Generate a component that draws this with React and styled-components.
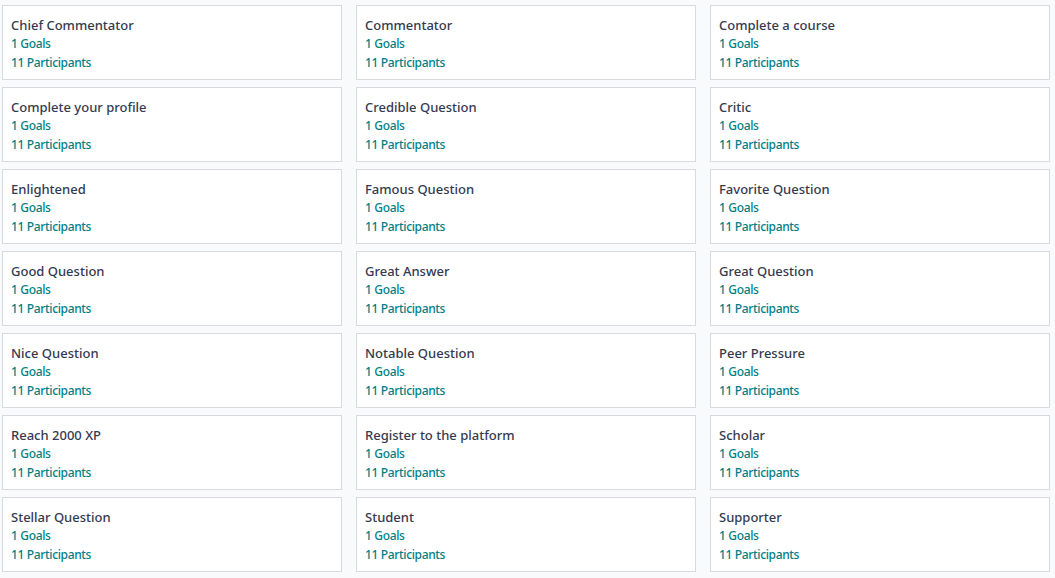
import React from "react";
import styled, { createGlobalStyle } from "styled-components";

const GlobalStyle = createGlobalStyle`
  html, body {
    margin: 0;
    padding: 0;
    background: #f9fafb;
  }
  body {
    font-family: "Noto Sans", "Open Sans", sans-serif;
  }
`;

const badges = [
  "Chief Commentator",
  "Commentator",
  "Complete a course",
  "Complete your profile",
  "Credible Question",
  "Critic",
  "Enlightened",
  "Famous Question",
  "Favorite Question",
  "Good Question",
  "Great Answer",
  "Great Question",
  "Nice Question",
  "Notable Question",
  "Peer Pressure",
  "Reach 2000 XP",
  "Register to the platform",
  "Scholar",
  "Stellar Question",
  "Student",
  "Supporter",
];

const App = () => {
  return (
    <>
      <GlobalStyle />
      <Wrapper>
        {badges.map((name) => (
          <Card key={name}>
            <Title>{name}</Title>
            <Stat>1 Goals</Stat>
            <Stat>11 Participants</Stat>
          </Card>
        ))}
      </Wrapper>
    </>
  );
};

const Wrapper = styled.div`
  display: grid;
  grid-template-columns: repeat(3, 340px);
  grid-auto-rows: 75px;
  column-gap: 14px;
  row-gap: 7px;
  padding: 5px 0 6px 2px;
  background: #f9fafb;
`;

const Card = styled.div`
  display: flex;
  flex-direction: column;
  box-sizing: border-box;
  background: #ffffff;
  border: 1px solid #d8dadd;
  padding: 10px 8px 0 8px;
`;

const Title = styled.span`
  font-size: 13px;
  font-weight: 500;
  line-height: 18px;
  color: #343a4f;
`;

const Stat = styled.span`
  font-size: 12px;
  font-weight: 500;
  line-height: 19px;
  letter-spacing: -0.35px;
  color: #017e84;
`;

export default App;
